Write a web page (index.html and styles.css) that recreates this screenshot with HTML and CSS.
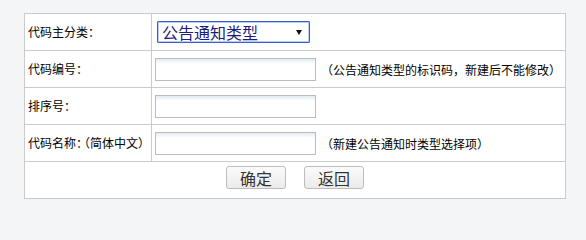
FILE: index.html
```html
<!DOCTYPE html>
<html lang="zh-CN">
<head>
<meta charset="utf-8">
<title>代码维护</title>
<link rel="stylesheet" href="styles.css">
</head>
<body>
<div class="page">
  <table class="form">
    <tr>
      <td class="label">代码主分类：</td>
      <td class="field">
        <span class="select-wrap">
          <select class="select">
            <option>公告通知类型</option>
          </select>
        </span>
      </td>
    </tr>
    <tr>
      <td class="label">代码编号：</td>
      <td class="field"><input class="text" type="text"><span class="note">（公告通知类型的标识码，新建后不能修改）</span></td>
    </tr>
    <tr>
      <td class="label">排序号：</td>
      <td class="field"><input class="text" type="text"></td>
    </tr>
    <tr>
      <td class="label">代码名称<span class="squeeze">：</span>（简体中文）</td>
      <td class="field"><input class="text" type="text"><span class="note">（新建公告通知时类型选择项）</span></td>
    </tr>
    <tr>
      <td class="actions" colspan="2">
        <div class="buttons">
          <button class="btn" type="button">确定</button>
          <button class="btn" type="button">返回</button>
        </div>
      </td>
    </tr>
  </table>
</div>
</body>
</html>
```

FILE: styles.css
```css
html, body {
  margin: 0;
  padding: 0;
  background: #f4f5f7;
}

body {
  font-family: "Noto Sans CJK SC", "DejaVu Sans", sans-serif;
  font-size: 12px;
  color: #000;
}

.page {
  padding: 13px 0 0 24px;
}

.form {
  width: 542px;
  border-collapse: collapse;
  background: #fff;
  border: 1px solid #cbcbcb;
  table-layout: fixed;
}

.form td {
  border: 1px solid #cbcbcb;
  height: 37px;
  padding: 0;
  box-sizing: border-box;
  vertical-align: middle;
}

.form tr > td.label {
  width: 127px;
  padding-left: 3px;
  white-space: nowrap;
  line-height: 14px;
}

.squeeze {
  letter-spacing: -4px;
}

.field {
  padding-left: 3px !important;
  white-space: nowrap;
}

.select-wrap {
  position: relative;
  display: inline-block;
  margin-left: 2px;
  vertical-align: middle;
}

.select {
  appearance: none;
  -webkit-appearance: none;
  width: 153px;
  height: 22px;
  box-sizing: border-box;
  border: 1px solid #3c5ccc;
  box-shadow: inset 0 0 0 1px #b8cbf2;
  border-radius: 1px;
  background: #fff;
  color: #1b1b78;
  font-family: "Noto Sans CJK SC", sans-serif;
  font-size: 16px;
  line-height: 18px;
  padding: 0 0 0 4px;
  margin: 0;
  outline: none;
}

.select-wrap::after {
  content: "";
  position: absolute;
  right: 8px;
  top: 9px;
  width: 0;
  height: 0;
  border-left: 3px solid transparent;
  border-right: 3px solid transparent;
  border-top: 5px solid #111;
  pointer-events: none;
}

.text {
  width: 161px;
  height: 23px;
  box-sizing: border-box;
  border: 1px solid #bfbcb7;
  background: linear-gradient(#dfeaf3 0, #f4f8fb 3px, #fff 5px);
  margin: 0;
  padding: 0 3px;
  vertical-align: middle;
  font-size: 12px;
  outline: none;
}

.note {
  margin-left: 5px;
  vertical-align: middle;
}

.actions {
  vertical-align: top !important;
  padding-top: 4px !important;
}

.buttons {
  display: flex;
  justify-content: center;
  gap: 18px;
}

.btn {
  width: 60px;
  height: 23px;
  box-sizing: border-box;
  border: 1px solid #bcbcbc;
  border-radius: 3px;
  background: linear-gradient(#fbfbfb, #ebebeb);
  color: #333;
  font-family: "Noto Sans CJK SC", sans-serif;
  font-size: 16px;
  line-height: 20px;
  padding: 0;
  margin: 0;
}
```
